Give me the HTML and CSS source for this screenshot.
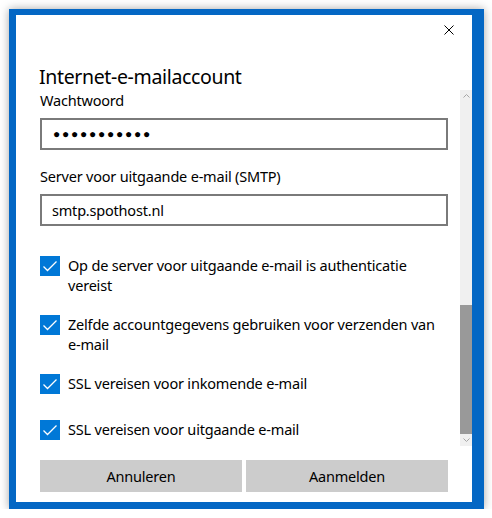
FILE: index.html
```html
<!DOCTYPE html>
<html lang="nl">
  <head>
    <meta charset="UTF-8" />
    <title>Internet-e-mailaccount</title>
    <link rel="stylesheet" href="styles.css">
  </head>
  <body>
    <div class="window">
      <div class="titlebar">
        <svg class="close" width="10" height="10" viewBox="0 0 10 10">
          <path d="M0.5 0.5 L9.5 9.5 M9.5 0.5 L0.5 9.5" stroke="#000" stroke-width="1" fill="none"/>
        </svg>
      </div>
      <h1 class="heading">Internet-e-mailaccount</h1>
      <div class="scroller">
        <div class="content">
          <div class="label">Wachtwoord</div>
          <div class="field password">●●●●●●●●●●●</div>

          <div class="label spaced">Server voor uitgaande e-mail (SMTP)</div>
          <div class="field">smtp.spothost.nl</div>

          <div class="checks">
            <div class="check">
              <span class="box"><svg width="20" height="20" viewBox="0 0 20 20"><path d="M3.5 10.5 L7.5 14.5 L16.5 5.5" stroke="#fff" stroke-width="1.3" fill="none"/></svg></span>
              <span class="check-text">Op de server voor uitgaande e-mail is authenticatie vereist</span>
            </div>
            <div class="check">
              <span class="box"><svg width="20" height="20" viewBox="0 0 20 20"><path d="M3.5 10.5 L7.5 14.5 L16.5 5.5" stroke="#fff" stroke-width="1.3" fill="none"/></svg></span>
              <span class="check-text">Zelfde accountgegevens gebruiken voor verzenden van e-mail</span>
            </div>
            <div class="check">
              <span class="box"><svg width="20" height="20" viewBox="0 0 20 20"><path d="M3.5 10.5 L7.5 14.5 L16.5 5.5" stroke="#fff" stroke-width="1.3" fill="none"/></svg></span>
              <span class="check-text">SSL vereisen voor inkomende e-mail</span>
            </div>
            <div class="check">
              <span class="box"><svg width="20" height="20" viewBox="0 0 20 20"><path d="M3.5 10.5 L7.5 14.5 L16.5 5.5" stroke="#fff" stroke-width="1.3" fill="none"/></svg></span>
              <span class="check-text">SSL vereisen voor uitgaande e-mail</span>
            </div>
          </div>
        </div>
        <div class="scrollbar">
          <div class="arrow">
            <svg width="7" height="4" viewBox="0 0 7 4"><path d="M0.5 3.5 L3.5 0.5 L6.5 3.5" stroke="#a6a6a6" fill="none"/></svg>
          </div>
          <div class="track"><div class="thumb"></div></div>
          <div class="arrow">
            <svg width="7" height="4" viewBox="0 0 7 4"><path d="M0.5 0.5 L3.5 3.5 L6.5 0.5" stroke="#a6a6a6" fill="none"/></svg>
          </div>
        </div>
      </div>
      <div class="footer">
        <button class="btn">Annuleren</button>
        <button class="btn">Aanmelden</button>
      </div>
    </div>
  </body>
</html>
```
FILE: styles.css
```css
body {
    margin: 0;
    background: #fff;
    font-family: "Noto Sans", "Open Sans", sans-serif;
    font-size: 14.5px;
    letter-spacing: -0.2px;
    color: #000;
}

.window {
    box-sizing: border-box;
    width: 475px;
    height: 500px;
    margin: 9px 0 0 9px;
    background: #fff;
    border-style: solid;
    border-color: #0467c4;
    border-width: 6px 12px 7px 7px;
    box-shadow: 0 0 9px rgba(0, 0, 0, 0.35);
    display: flex;
    flex-direction: column;
}

.titlebar {
    height: 30px;
    display: flex;
    align-items: center;
    justify-content: flex-end;
    padding-right: 18px;
}

.heading {
    margin: 19px 0 0 23px;
    font-size: 19.5px;
    letter-spacing: -0.35px;
    font-weight: normal;
    line-height: 26px;
}

.scroller {
    height: 356px;
    display: flex;
}

.content {
    flex: 1;
    padding: 0 12px 0 24px;
}

.label {
    line-height: 20px;
}

.label.spaced {
    margin-top: 16px;
}

.field {
    box-sizing: border-box;
    height: 32px;
    margin-top: 8px;
    border: 2px solid #7a7a7a;
    padding: 0 10px;
    line-height: 28px;
}

.password {
    font-family: "Liberation Sans", sans-serif;
    font-size: 12px;
    letter-spacing: 1.75px;
    padding-left: 11px;
}

.checks {
    margin-top: 29px;
}

.check {
    display: flex;
    gap: 8px;
    min-height: 32px;
    padding-bottom: 5px;
    margin-bottom: 14px;
    box-sizing: border-box;
}

.box {
    flex: none;
    width: 20px;
    height: 20px;
    margin-top: 1px;
    background: #0078d7;
}

.box svg {
    display: block;
}

.check-text {
    line-height: 20px;
}

.scrollbar {
    width: 12px;
    display: flex;
    flex-direction: column;
    background: #f0f0f0;
}

.arrow {
    height: 12px;
    display: flex;
    align-items: center;
    justify-content: center;
}

.track {
    flex: 1;
    display: flex;
    flex-direction: column;
    justify-content: flex-end;
}

.thumb {
    height: 129px;
    background: #999;
}

.footer {
    display: flex;
    gap: 4px;
    padding: 14px 24px 10px 24px;
}

.btn {
    flex: 1;
    height: 32px;
    border: none;
    background: #ccc;
    font-family: inherit;
    font-size: 14.5px;
    letter-spacing: -0.2px;
    color: #000;
    padding: 0;
}
```
